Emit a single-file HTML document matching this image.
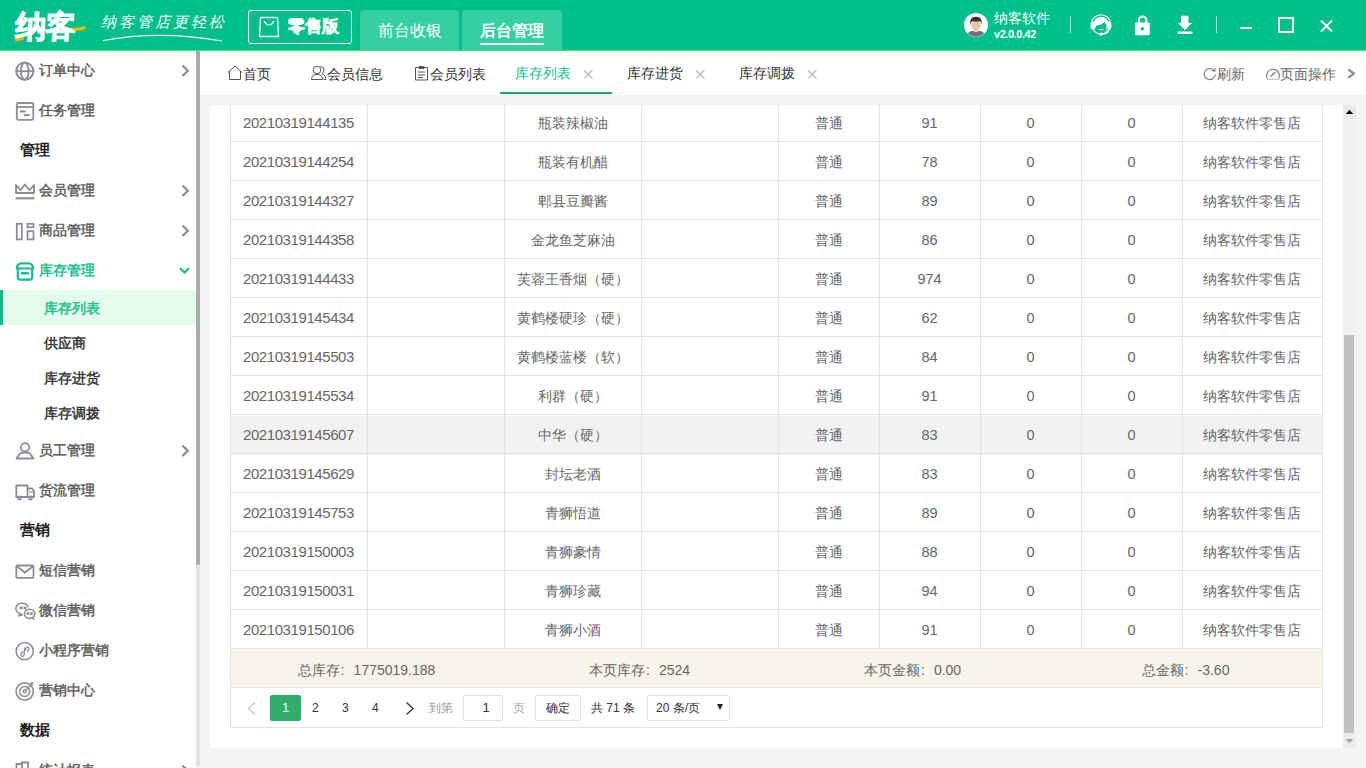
<!DOCTYPE html><html><head><meta charset="utf-8"><style>
*{box-sizing:border-box;margin:0;padding:0}
html,body{width:1366px;height:768px;overflow:hidden;background:#f4f4f4;font-family:"Liberation Sans",sans-serif;position:relative}
.a{position:absolute;white-space:nowrap}
svg{position:absolute;overflow:visible}
#hdr{position:absolute;left:0;top:0;width:1366px;height:51px;background:#01bf8a;border-bottom:1px solid #3ee07c}
#side{position:absolute;left:0;top:51px;width:196px;height:717px;background:#fff;overflow:hidden}
#tabs{position:absolute;left:200px;top:51px;width:1166px;height:44px;background:#fff}
#panel{position:absolute;left:210px;top:105px;width:1146px;height:643px;background:#fff;overflow:hidden}
.mt{font-size:14px;font-weight:normal;-webkit-text-stroke:0.45px currentColor;color:#5c5c5c;line-height:16px}
.sec{font-size:15px;font-weight:bold;color:#1e1e1e;line-height:16px}
.sub{font-size:14px;font-weight:normal;-webkit-text-stroke:0.45px currentColor;color:#333;line-height:16px}
.cell{position:absolute;font-size:14px;color:#666;line-height:16px;text-align:center;white-space:nowrap}
.tt{font-size:14px;color:#333;line-height:16px}
</style></head><body><div id="hdr">
<div class="a" style="left:16px;top:10px;font-size:31px;line-height:34px;font-weight:bold;color:#fff;letter-spacing:-1px;-webkit-text-stroke:1px #fff;transform:skewX(-3deg)">纳客</div>
<svg style="left:0;top:0" width="240" height="50"><path d="M15 38.5 Q19 38.5 25 36.5 L23.5 39.5 Q19 41.5 15.5 41.5Z" fill="#f5b400"/><path d="M72 28 Q79 27.5 86 26 L85 29.5 Q79 31.5 73 30Z" fill="#f5b400"/><path d="M103 40.5 Q160 30 222 41" stroke="#fff" stroke-width="1.2" fill="none"/></svg>
<div class="a" style="left:101px;top:13px;font-size:15px;line-height:18px;color:#fff;letter-spacing:3px;font-style:italic">纳客管店更轻松</div>
<div class="a" style="left:248px;top:10px;width:104px;height:34px;border:1px solid #fff;border-radius:3px"></div>
<svg style="left:0;top:0" width="300" height="50"><path d="M260.5 17.5 L277.5 17.5 L278.5 36.5 L259.5 36.5 Z" stroke="#fff" stroke-width="1.4" fill="none" stroke-linejoin="round"/><path d="M264 21 Q269 29 274 21" stroke="#fff" stroke-width="1.4" fill="none"/></svg>
<div class="a" style="left:288px;top:17px;font-size:17px;line-height:20px;font-weight:bold;color:#fff;-webkit-text-stroke:0.5px #fff">零售版</div>
<div class="a" style="left:360px;top:10px;width:99px;height:40px;background:#35d0a2;border-radius:4px 4px 0 0"></div>
<div class="a" style="left:462px;top:10px;width:100px;height:40px;background:#35d0a2;border-radius:4px 4px 0 0"></div>
<div class="a" style="left:378px;top:22px;font-size:16px;line-height:18px;color:#fff">前台收银</div>
<div class="a" style="left:480px;top:22px;font-size:16px;line-height:18px;color:#fff;font-weight:bold">后台管理</div>
<div class="a" style="left:480px;top:43px;width:64px;height:2px;background:#fff"></div>
<svg style="left:0;top:0" width="1366" height="50"><circle cx="976" cy="25" r="12" fill="#fff"/><clipPath id="av"><circle cx="976" cy="25" r="11.5"/></clipPath><g clip-path="url(#av)"><path d="M966 39 Q967 31.5 972 31 H980 Q985 31.5 986 39Z" fill="#6e6e80"/><rect x="974" y="28" width="4" height="4" fill="#f0c49c"/><ellipse cx="976" cy="24.5" rx="4.8" ry="5.6" fill="#f3c6a0"/><path d="M970 25 Q969.5 16.5 976 16.8 Q982.5 16.5 981.8 25 Q981 21 979.5 21 Q976 22 972.5 21 Q971 21.5 970 25Z" fill="#333"/></g><line x1="1070.5" y1="16" x2="1070.5" y2="33" stroke="#9fe8cf" stroke-width="1"/><line x1="1216.5" y1="16" x2="1216.5" y2="33" stroke="#9fe8cf" stroke-width="1"/><circle cx="1101" cy="24.3" r="9.6" stroke="#fff" stroke-width="1.1" fill="none"/><circle cx="1101" cy="24.5" r="7.8" fill="#fff"/><path d="M1095.2 31 Q1094.6 25.5 1098 25.2 Q1102.5 25 1104.3 21.8 Q1106.6 24.5 1106.8 27.5 Q1106 31.8 1101 32.5 Q1097 32.5 1095.2 31Z" fill="#01bf8a"/><path d="M1098.5 29.3 Q1101 30.5 1103.5 29.3" stroke="#fff" stroke-width="0.9" fill="none"/><rect x="1090.6" y="21.8" width="4.6" height="7.6" rx="2.2" fill="#fff"/><rect x="1106.8" y="21.8" width="4.6" height="7.6" rx="2.2" fill="#fff"/><path d="M1109.5 29 Q1108 34.2 1101.5 34.3" stroke="#fff" stroke-width="1.2" fill="none"/><circle cx="1100.6" cy="34.2" r="1.6" fill="#fff"/><path d="M1138.9 23 V20.3 A3.7 3.7 0 0 1 1146.3 20.3 V23" stroke="#fff" stroke-width="2" fill="none"/><rect x="1135" y="22.6" width="14.8" height="12.7" rx="1.3" fill="#fff"/><circle cx="1142.4" cy="28.8" r="1.7" fill="#01bf8a"/><path d="M1182 15.7 Q1181 15.7 1181 16.7 V23 H1178 L1185 30.3 L1192 23 H1188.5 V16.7 Q1188.5 15.7 1187.5 15.7Z" fill="#fff"/><rect x="1177.6" y="31.4" width="15" height="2.6" rx="1.3" fill="#fff"/><rect x="1240" y="27" width="12" height="2" fill="#fff"/><rect x="1279" y="18" width="14" height="14" stroke="#fcffe6" stroke-width="2" fill="none"/><path d="M1321 20.5 L1332 31.5 M1332 20.5 L1321 31.5" stroke="#fff" stroke-width="1.8"/></svg>
<div class="a" style="left:994px;top:10px;font-size:14px;line-height:16px;color:#fff">纳客软件</div>
<div class="a" style="left:994px;top:28px;font-size:11px;line-height:13px;color:#fff;font-weight:bold;letter-spacing:-0.45px">v2.0.0.42</div>
</div>
<div id="side">
<div class="a mt" style="left:39px;top:11px;color:#5c5c5c">订单中心</div>
<div class="a mt" style="left:39px;top:51px;color:#5c5c5c">任务管理</div>
<div class="a sec" style="left:20px;top:91px">管理</div>
<div class="a mt" style="left:39px;top:131px;color:#5c5c5c">会员管理</div>
<div class="a mt" style="left:39px;top:171px;color:#5c5c5c">商品管理</div>
<div class="a mt" style="left:39px;top:211px;color:#13be8a">库存管理</div>
<div class="a" style="left:0;top:239px;width:196px;height:35px;background:#e4fcec"></div>
<div class="a" style="left:0;top:239px;width:3px;height:35px;background:#02bf8a"></div>
<div class="a sub" style="left:44px;top:249px;color:#13be8a">库存列表</div>
<div class="a sub" style="left:44px;top:284px">供应商</div>
<div class="a sub" style="left:44px;top:319px">库存进货</div>
<div class="a sub" style="left:44px;top:354px">库存调拨</div>
<div class="a mt" style="left:39px;top:391px;color:#5c5c5c">员工管理</div>
<div class="a mt" style="left:39px;top:431px;color:#5c5c5c">货流管理</div>
<div class="a sec" style="left:20px;top:471px">营销</div>
<div class="a mt" style="left:39px;top:511px;color:#5c5c5c">短信营销</div>
<div class="a mt" style="left:39px;top:551px;color:#5c5c5c">微信营销</div>
<div class="a mt" style="left:39px;top:591px;color:#5c5c5c">小程序营销</div>
<div class="a mt" style="left:39px;top:631px;color:#5c5c5c">营销中心</div>
<div class="a sec" style="left:20px;top:671px">数据</div>
<div class="a mt" style="left:39px;top:711px;color:#5c5c5c">统计报表</div>
<svg style="left:0;top:-51px" width="200" height="820"><path d="M182.5 65.5 L187.8 70.8 L182.5 76.0" stroke="#8a8a99" stroke-width="2.2" fill="none"/><path d="M182.5 185.5 L187.8 190.8 L182.5 196.0" stroke="#8a8a99" stroke-width="2.2" fill="none"/><path d="M182.5 225.5 L187.8 230.8 L182.5 236.0" stroke="#8a8a99" stroke-width="2.2" fill="none"/><path d="M180 268 L184.5 272.5 L189 268" stroke="#13be8a" stroke-width="2" fill="none"/><path d="M182.5 445.5 L187.8 450.8 L182.5 456.0" stroke="#8a8a99" stroke-width="2.2" fill="none"/><path d="M182.5 765.5 L187.8 770.8 L182.5 776.0" stroke="#8a8a99" stroke-width="2.2" fill="none"/><g stroke="#8c8c99" stroke-width="1.8" fill="none"><circle cx="24.8" cy="71.2" r="8.6" stroke-width="2"/><ellipse cx="24.8" cy="71.2" rx="3.8" ry="8.6"/><line x1="16" y1="71.2" x2="33.6" y2="71.2"/><rect x="16.8" y="103" width="16.5" height="16.8" rx="1.5"/><line x1="16.8" y1="107" x2="33.3" y2="107"/><line x1="20.5" y1="111.5" x2="25" y2="111.5" stroke-linecap="round"/><line x1="24.5" y1="115" x2="29" y2="115" stroke-linecap="round"/><path d="M16 193 V185 L20.5 190 L25 184.5 L29.5 190 L34 185 V193 Z" stroke-linejoin="round"/><line x1="15.5" y1="198.3" x2="34.5" y2="198.3" stroke-width="2.2"/><rect x="16.8" y="223.8" width="5" height="15.6"/><rect x="27.5" y="223.8" width="6" height="3.5"/><rect x="27.5" y="231.2" width="6" height="8.2"/></g><g stroke="#13be8a" stroke-width="2.2" fill="none"><path d="M16.8 268.5 Q17 263.6 21.5 263.3 H28.5 Q33 263.6 33.2 268.5 Z" stroke-linejoin="round"/><path d="M17.8 268.5 V277.3 Q17.8 279.6 20.1 279.6 H29.9 Q32.2 279.6 32.2 277.3 V268.5"/><line x1="22" y1="273.3" x2="28" y2="273.3" stroke-linecap="round" stroke-width="2.4"/></g><g stroke="#8c8c99" stroke-width="1.8" fill="none"><circle cx="25" cy="447.3" r="4.2"/><path d="M16.5 458.5 L20 453.5 Q25 451.5 30 453.5 L33.5 458.5 Z" stroke-linejoin="round"/><path d="M16.3 497 V485.5 H27.5 V497 Z" stroke-linejoin="round"/><path d="M27.5 488.5 H32 L34 491 V497 H27.5"/><line x1="29" y1="492" x2="33.5" y2="492" stroke-width="1.2"/><circle cx="19.5" cy="498" r="1.5" fill="#fff"/><circle cx="30.5" cy="498" r="1.5" fill="#fff"/><rect x="16.3" y="565.5" width="17.2" height="12.3" rx="1"/><path d="M16.5 566 L24.9 572.5 L33.3 566"/><g transform="translate(1.6,0.3)"><path d="M26.5 607 A6.2 5.4 0 1 0 19 613.5 L16.8 615.8 L21.5 614.2" stroke-width="1.5"/><ellipse cx="28" cy="613.5" rx="5.2" ry="4.6" fill="#fff" stroke-width="1.5"/><path d="M30.5 617.6 L33 619" stroke-width="1.5"/><circle cx="19.6" cy="607.6" r="0.7" fill="#8c8c99"/><circle cx="23.4" cy="607.6" r="0.7" fill="#8c8c99"/><circle cx="26.3" cy="613.2" r="0.7" fill="#8c8c99"/><circle cx="29.8" cy="613.2" r="0.7" fill="#8c8c99"/></g><circle cx="24.7" cy="651.2" r="8.6" stroke-width="1.5"/><path d="M21 655.5 Q21 652 23.5 651.8 M24.5 650.5 Q26 650 26 648 A1.6 1.6 0 0 1 29 648.5 Q29 651 27 651.5 M21 655.5 A1.6 1.6 0 0 0 24 655 Q24.5 653 24.5 650.5 L25 647.5" stroke-width="1.3"/><circle cx="24.7" cy="691.5" r="8.6" stroke-width="1.6"/><circle cx="24.7" cy="691.5" r="5" stroke-width="1.5"/><circle cx="24.7" cy="691.5" r="1.5" stroke-width="1.3"/><path d="M25 691 L31.5 684.5 M30 683.5 L32.5 683 L32 685.5" stroke-width="1.4"/><path d="M16.5 770 V764 H22 V770 M22 770 V762.5 H28 V770" stroke-width="1.8"/></g></svg>
</div>
<div class="a" style="left:196px;top:51px;width:4px;height:716px;background:#e3e3e3;border-radius:2px"></div>
<div class="a" style="left:196px;top:51px;width:4px;height:514px;background:#ababab;border-radius:0 0 2px 2px"></div>
<div id="tabs">
<div class="a tt" style="left:43px;top:15px;color:#333;">首页</div>
<div class="a tt" style="left:127px;top:15px;color:#333;">会员信息</div>
<div class="a tt" style="left:230px;top:15px;color:#333;">会员列表</div>
<div class="a tt" style="left:315px;top:14px;color:#13be8a;">库存列表</div>
<div class="a tt" style="left:427px;top:14px;color:#333;">库存进货</div>
<div class="a tt" style="left:539px;top:14px;color:#333;">库存调拨</div>
<div class="a tt" style="left:1017px;top:15px;color:#666;">刷新</div>
<div class="a tt" style="left:1080px;top:15px;color:#666;">页面操作</div>
<div class="a" style="left:300px;top:41px;width:112px;height:2px;background:#1aa85e"></div>
<svg style="left:-200px;top:-51px" width="1366" height="100"><g stroke="#555" stroke-width="1" fill="none"><path d="M228 72.5 L235 66 L242 72.5 M229.5 71 V79.5 H240.5 V71"/><circle cx="317" cy="70" r="3.8"/><path d="M311.5 79.5 Q311.5 74.5 317 74.5 Q322.5 74.5 322.5 79.5 Z"/><path d="M320.5 66.5 Q324 66.5 324 70 Q324 72.5 322 73.5 Q326 75 326 79.5 H323.5"/><path d="M415.5 67.5 H427.5 V80 H415.5 Z M419 66.5 H424 V68.5 H419 Z M418 72 H425 M418 75 H425 M418 77.5 H423"/></g><g stroke="#bbb" stroke-width="1.2"><path d="M584 70 L592.5 78.5 M592.5 70 L584 78.5"/><path d="M696 70 L704.5 78.5 M704.5 70 L696 78.5"/><path d="M808 70 L816.5 78.5 M816.5 70 L808 78.5"/></g><g stroke="#777" stroke-width="1.1" fill="none"><path d="M1214.5 71 A5.6 5.6 0 1 0 1215.4 74.5"/><path d="M1212 70.8 L1214.8 71.2 L1215.2 68.2"/><path d="M1267.3 78.2 A6.3 6.3 0 1 1 1278.7 78.2"/><path d="M1270.5 76.5 L1275.2 72.3" stroke-width="1.3"/><line x1="1266.5" y1="79.3" x2="1279.5" y2="79.3" stroke="#c8c8c8" stroke-width="1.4"/></g><path d="M1348.3 69.3 L1353.8 73.6 L1348.3 77.9" stroke="#8a8a99" stroke-width="2.2" fill="none"/></svg>
</div>
<div id="panel">
<div class="a" style="left:21px;top:311px;width:1091px;height:39px;background:#f2f2f2"></div>
<div class="a" style="left:21px;top:543px;width:1091px;height:39px;background:#f8f4ea"></div>
<svg style="left:-210px;top:-105px" width="1366" height="768"><g stroke="#e4e4e4" stroke-width="1"><line x1="230" y1="102.5" x2="1322" y2="102.5"/><line x1="230" y1="141.5" x2="1322" y2="141.5"/><line x1="230" y1="180.5" x2="1322" y2="180.5"/><line x1="230" y1="219.5" x2="1322" y2="219.5"/><line x1="230" y1="258.5" x2="1322" y2="258.5"/><line x1="230" y1="297.5" x2="1322" y2="297.5"/><line x1="230" y1="336.5" x2="1322" y2="336.5"/><line x1="230" y1="375.5" x2="1322" y2="375.5"/><line x1="230" y1="414.5" x2="1322" y2="414.5"/><line x1="230" y1="453.5" x2="1322" y2="453.5"/><line x1="230" y1="492.5" x2="1322" y2="492.5"/><line x1="230" y1="531.5" x2="1322" y2="531.5"/><line x1="230" y1="570.5" x2="1322" y2="570.5"/><line x1="230" y1="609.5" x2="1322" y2="609.5"/><line x1="230" y1="648.5" x2="1322" y2="648.5"/><line x1="230.5" y1="95" x2="230.5" y2="648"/><line x1="367.5" y1="95" x2="367.5" y2="648"/><line x1="504.5" y1="95" x2="504.5" y2="648"/><line x1="641.5" y1="95" x2="641.5" y2="648"/><line x1="778.5" y1="95" x2="778.5" y2="648"/><line x1="879.5" y1="95" x2="879.5" y2="648"/><line x1="980.5" y1="95" x2="980.5" y2="648"/><line x1="1081.5" y1="95" x2="1081.5" y2="648"/><line x1="1182.5" y1="95" x2="1182.5" y2="648"/><line x1="1322.5" y1="95" x2="1322.5" y2="648"/><line x1="230.5" y1="648" x2="230.5" y2="728"/><line x1="1322.5" y1="648" x2="1322.5" y2="728"/><line x1="230" y1="687.5" x2="1323" y2="687.5"/><line x1="230" y1="727.5" x2="1323" y2="727.5"/></g>
</svg>
<div class="cell" style="left:33px;top:10px;text-align:left"><span style="font-size:15px;letter-spacing:-0.42px">20210319144135</span></div>
<div class="cell" style="left:294px;top:10px;width:137px">瓶装辣椒油</div>
<div class="cell" style="left:568px;top:10px;width:101px">普通</div>
<div class="cell" style="left:669px;top:10px;width:101px"><span style="font-size:14.5px">91</span></div>
<div class="cell" style="left:770px;top:10px;width:101px"><span style="font-size:14.5px">0</span></div>
<div class="cell" style="left:871px;top:10px;width:101px"><span style="font-size:14.5px">0</span></div>
<div class="cell" style="left:972px;top:10px;width:140px">纳客软件零售店</div>
<div class="cell" style="left:33px;top:49px;text-align:left"><span style="font-size:15px;letter-spacing:-0.42px">20210319144254</span></div>
<div class="cell" style="left:294px;top:49px;width:137px">瓶装有机醋</div>
<div class="cell" style="left:568px;top:49px;width:101px">普通</div>
<div class="cell" style="left:669px;top:49px;width:101px"><span style="font-size:14.5px">78</span></div>
<div class="cell" style="left:770px;top:49px;width:101px"><span style="font-size:14.5px">0</span></div>
<div class="cell" style="left:871px;top:49px;width:101px"><span style="font-size:14.5px">0</span></div>
<div class="cell" style="left:972px;top:49px;width:140px">纳客软件零售店</div>
<div class="cell" style="left:33px;top:88px;text-align:left"><span style="font-size:15px;letter-spacing:-0.42px">20210319144327</span></div>
<div class="cell" style="left:294px;top:88px;width:137px">郫县豆瓣酱</div>
<div class="cell" style="left:568px;top:88px;width:101px">普通</div>
<div class="cell" style="left:669px;top:88px;width:101px"><span style="font-size:14.5px">89</span></div>
<div class="cell" style="left:770px;top:88px;width:101px"><span style="font-size:14.5px">0</span></div>
<div class="cell" style="left:871px;top:88px;width:101px"><span style="font-size:14.5px">0</span></div>
<div class="cell" style="left:972px;top:88px;width:140px">纳客软件零售店</div>
<div class="cell" style="left:33px;top:127px;text-align:left"><span style="font-size:15px;letter-spacing:-0.42px">20210319144358</span></div>
<div class="cell" style="left:294px;top:127px;width:137px">金龙鱼芝麻油</div>
<div class="cell" style="left:568px;top:127px;width:101px">普通</div>
<div class="cell" style="left:669px;top:127px;width:101px"><span style="font-size:14.5px">86</span></div>
<div class="cell" style="left:770px;top:127px;width:101px"><span style="font-size:14.5px">0</span></div>
<div class="cell" style="left:871px;top:127px;width:101px"><span style="font-size:14.5px">0</span></div>
<div class="cell" style="left:972px;top:127px;width:140px">纳客软件零售店</div>
<div class="cell" style="left:33px;top:166px;text-align:left"><span style="font-size:15px;letter-spacing:-0.42px">20210319144433</span></div>
<div class="cell" style="left:294px;top:166px;width:137px">芙蓉王香烟（硬）</div>
<div class="cell" style="left:568px;top:166px;width:101px">普通</div>
<div class="cell" style="left:669px;top:166px;width:101px"><span style="font-size:14.5px">974</span></div>
<div class="cell" style="left:770px;top:166px;width:101px"><span style="font-size:14.5px">0</span></div>
<div class="cell" style="left:871px;top:166px;width:101px"><span style="font-size:14.5px">0</span></div>
<div class="cell" style="left:972px;top:166px;width:140px">纳客软件零售店</div>
<div class="cell" style="left:33px;top:205px;text-align:left"><span style="font-size:15px;letter-spacing:-0.42px">20210319145434</span></div>
<div class="cell" style="left:294px;top:205px;width:137px">黄鹤楼硬珍（硬）</div>
<div class="cell" style="left:568px;top:205px;width:101px">普通</div>
<div class="cell" style="left:669px;top:205px;width:101px"><span style="font-size:14.5px">62</span></div>
<div class="cell" style="left:770px;top:205px;width:101px"><span style="font-size:14.5px">0</span></div>
<div class="cell" style="left:871px;top:205px;width:101px"><span style="font-size:14.5px">0</span></div>
<div class="cell" style="left:972px;top:205px;width:140px">纳客软件零售店</div>
<div class="cell" style="left:33px;top:244px;text-align:left"><span style="font-size:15px;letter-spacing:-0.42px">20210319145503</span></div>
<div class="cell" style="left:294px;top:244px;width:137px">黄鹤楼蓝楼（软）</div>
<div class="cell" style="left:568px;top:244px;width:101px">普通</div>
<div class="cell" style="left:669px;top:244px;width:101px"><span style="font-size:14.5px">84</span></div>
<div class="cell" style="left:770px;top:244px;width:101px"><span style="font-size:14.5px">0</span></div>
<div class="cell" style="left:871px;top:244px;width:101px"><span style="font-size:14.5px">0</span></div>
<div class="cell" style="left:972px;top:244px;width:140px">纳客软件零售店</div>
<div class="cell" style="left:33px;top:283px;text-align:left"><span style="font-size:15px;letter-spacing:-0.42px">20210319145534</span></div>
<div class="cell" style="left:294px;top:283px;width:137px">利群（硬）</div>
<div class="cell" style="left:568px;top:283px;width:101px">普通</div>
<div class="cell" style="left:669px;top:283px;width:101px"><span style="font-size:14.5px">91</span></div>
<div class="cell" style="left:770px;top:283px;width:101px"><span style="font-size:14.5px">0</span></div>
<div class="cell" style="left:871px;top:283px;width:101px"><span style="font-size:14.5px">0</span></div>
<div class="cell" style="left:972px;top:283px;width:140px">纳客软件零售店</div>
<div class="cell" style="left:33px;top:322px;text-align:left"><span style="font-size:15px;letter-spacing:-0.42px">20210319145607</span></div>
<div class="cell" style="left:294px;top:322px;width:137px">中华（硬）</div>
<div class="cell" style="left:568px;top:322px;width:101px">普通</div>
<div class="cell" style="left:669px;top:322px;width:101px"><span style="font-size:14.5px">83</span></div>
<div class="cell" style="left:770px;top:322px;width:101px"><span style="font-size:14.5px">0</span></div>
<div class="cell" style="left:871px;top:322px;width:101px"><span style="font-size:14.5px">0</span></div>
<div class="cell" style="left:972px;top:322px;width:140px">纳客软件零售店</div>
<div class="cell" style="left:33px;top:361px;text-align:left"><span style="font-size:15px;letter-spacing:-0.42px">20210319145629</span></div>
<div class="cell" style="left:294px;top:361px;width:137px">封坛老酒</div>
<div class="cell" style="left:568px;top:361px;width:101px">普通</div>
<div class="cell" style="left:669px;top:361px;width:101px"><span style="font-size:14.5px">83</span></div>
<div class="cell" style="left:770px;top:361px;width:101px"><span style="font-size:14.5px">0</span></div>
<div class="cell" style="left:871px;top:361px;width:101px"><span style="font-size:14.5px">0</span></div>
<div class="cell" style="left:972px;top:361px;width:140px">纳客软件零售店</div>
<div class="cell" style="left:33px;top:400px;text-align:left"><span style="font-size:15px;letter-spacing:-0.42px">20210319145753</span></div>
<div class="cell" style="left:294px;top:400px;width:137px">青狮悟道</div>
<div class="cell" style="left:568px;top:400px;width:101px">普通</div>
<div class="cell" style="left:669px;top:400px;width:101px"><span style="font-size:14.5px">89</span></div>
<div class="cell" style="left:770px;top:400px;width:101px"><span style="font-size:14.5px">0</span></div>
<div class="cell" style="left:871px;top:400px;width:101px"><span style="font-size:14.5px">0</span></div>
<div class="cell" style="left:972px;top:400px;width:140px">纳客软件零售店</div>
<div class="cell" style="left:33px;top:439px;text-align:left"><span style="font-size:15px;letter-spacing:-0.42px">20210319150003</span></div>
<div class="cell" style="left:294px;top:439px;width:137px">青狮豪情</div>
<div class="cell" style="left:568px;top:439px;width:101px">普通</div>
<div class="cell" style="left:669px;top:439px;width:101px"><span style="font-size:14.5px">88</span></div>
<div class="cell" style="left:770px;top:439px;width:101px"><span style="font-size:14.5px">0</span></div>
<div class="cell" style="left:871px;top:439px;width:101px"><span style="font-size:14.5px">0</span></div>
<div class="cell" style="left:972px;top:439px;width:140px">纳客软件零售店</div>
<div class="cell" style="left:33px;top:478px;text-align:left"><span style="font-size:15px;letter-spacing:-0.42px">20210319150031</span></div>
<div class="cell" style="left:294px;top:478px;width:137px">青狮珍藏</div>
<div class="cell" style="left:568px;top:478px;width:101px">普通</div>
<div class="cell" style="left:669px;top:478px;width:101px"><span style="font-size:14.5px">94</span></div>
<div class="cell" style="left:770px;top:478px;width:101px"><span style="font-size:14.5px">0</span></div>
<div class="cell" style="left:871px;top:478px;width:101px"><span style="font-size:14.5px">0</span></div>
<div class="cell" style="left:972px;top:478px;width:140px">纳客软件零售店</div>
<div class="cell" style="left:33px;top:517px;text-align:left"><span style="font-size:15px;letter-spacing:-0.42px">20210319150106</span></div>
<div class="cell" style="left:294px;top:517px;width:137px">青狮小酒</div>
<div class="cell" style="left:568px;top:517px;width:101px">普通</div>
<div class="cell" style="left:669px;top:517px;width:101px"><span style="font-size:14.5px">91</span></div>
<div class="cell" style="left:770px;top:517px;width:101px"><span style="font-size:14.5px">0</span></div>
<div class="cell" style="left:871px;top:517px;width:101px"><span style="font-size:14.5px">0</span></div>
<div class="cell" style="left:972px;top:517px;width:140px">纳客软件零售店</div>
<div class="cell" style="left:20px;top:557px;width:273px">总库存<span style="display:inline-block;width:14px;text-align:left;padding-left:1px">:</span>1775019.188</div>
<div class="cell" style="left:293px;top:557px;width:273px">本页库存<span style="display:inline-block;width:14px;text-align:left;padding-left:1px">:</span>2524</div>
<div class="cell" style="left:566px;top:557px;width:273px">本页金额<span style="display:inline-block;width:14px;text-align:left;padding-left:1px">:</span>0.00</div>
<div class="cell" style="left:839px;top:557px;width:273px">总金额<span style="display:inline-block;width:14px;text-align:left;padding-left:1px">:</span>-3.60</div>
<div class="a" style="left:60px;top:590px;width:31px;height:26px;background:#31ae6c;border-radius:2px;color:#fff;font-size:12px;line-height:26px;text-align:center">1</div>
<div class="a" style="left:102px;top:595px;font-size:12px;line-height:16px;color:#333;">2</div>
<div class="a" style="left:132px;top:595px;font-size:12px;line-height:16px;color:#333;">3</div>
<div class="a" style="left:162px;top:595px;font-size:12px;line-height:16px;color:#333;">4</div>
<div class="a" style="left:219px;top:595px;font-size:12px;line-height:16px;color:#999;">到第</div>
<div class="a" style="left:253px;top:590px;width:40px;height:26px;border:1px solid #e2e2e2;border-radius:2px;font-size:13px;line-height:24px;text-align:center;color:#333;padding-left:6px">1</div>
<div class="a" style="left:303px;top:595px;font-size:12px;line-height:16px;color:#aaa;">页</div>
<div class="a" style="left:325px;top:590px;width:46px;height:26px;border:1px solid #e2e2e2;border-radius:2px;font-size:12px;line-height:24px;text-align:center;color:#333">确定</div>
<div class="a" style="left:381px;top:595px;font-size:12px;line-height:16px;color:#333;">共 71 条</div>
<div class="a" style="left:437px;top:590px;width:83px;height:26px;border:1px solid #e2e2e2;border-radius:2px;font-size:12px;line-height:24px;color:#333;padding-left:8px">20 条/页</div>
<svg style="left:-210px;top:-105px" width="1366" height="768"><path d="M255 702.5 L248.5 708.5 L255 714.5" stroke="#c8c8c8" stroke-width="1.3" fill="none"/><path d="M406.5 702.5 L413 708.5 L406.5 714.5" stroke="#333" stroke-width="1.3" fill="none"/><path d="M717 704 H723 L720 710Z" fill="#222"/></svg>
<div class="a" style="left:1133px;top:0;width:13px;height:643px;background:#f0f0f0"></div>
<div class="a" style="left:1134px;top:230px;width:10px;height:398px;background:#c1c1c1"></div>
<div class="a" style="left:1133px;top:0;width:13px;height:12px;background:#e8e8e8"></div>
<div class="a" style="left:1133px;top:628px;width:13px;height:15px;background:#ebebeb"></div>
<svg style="left:-210px;top:-105px" width="1366" height="768"><path d="M1345.8 114 L1349.5 109.8 L1353.2 114Z" fill="#000"/><path d="M1345.8 739 L1349.5 743 L1353.2 739Z" fill="#a3a3a3"/></svg>
</div></body></html>
